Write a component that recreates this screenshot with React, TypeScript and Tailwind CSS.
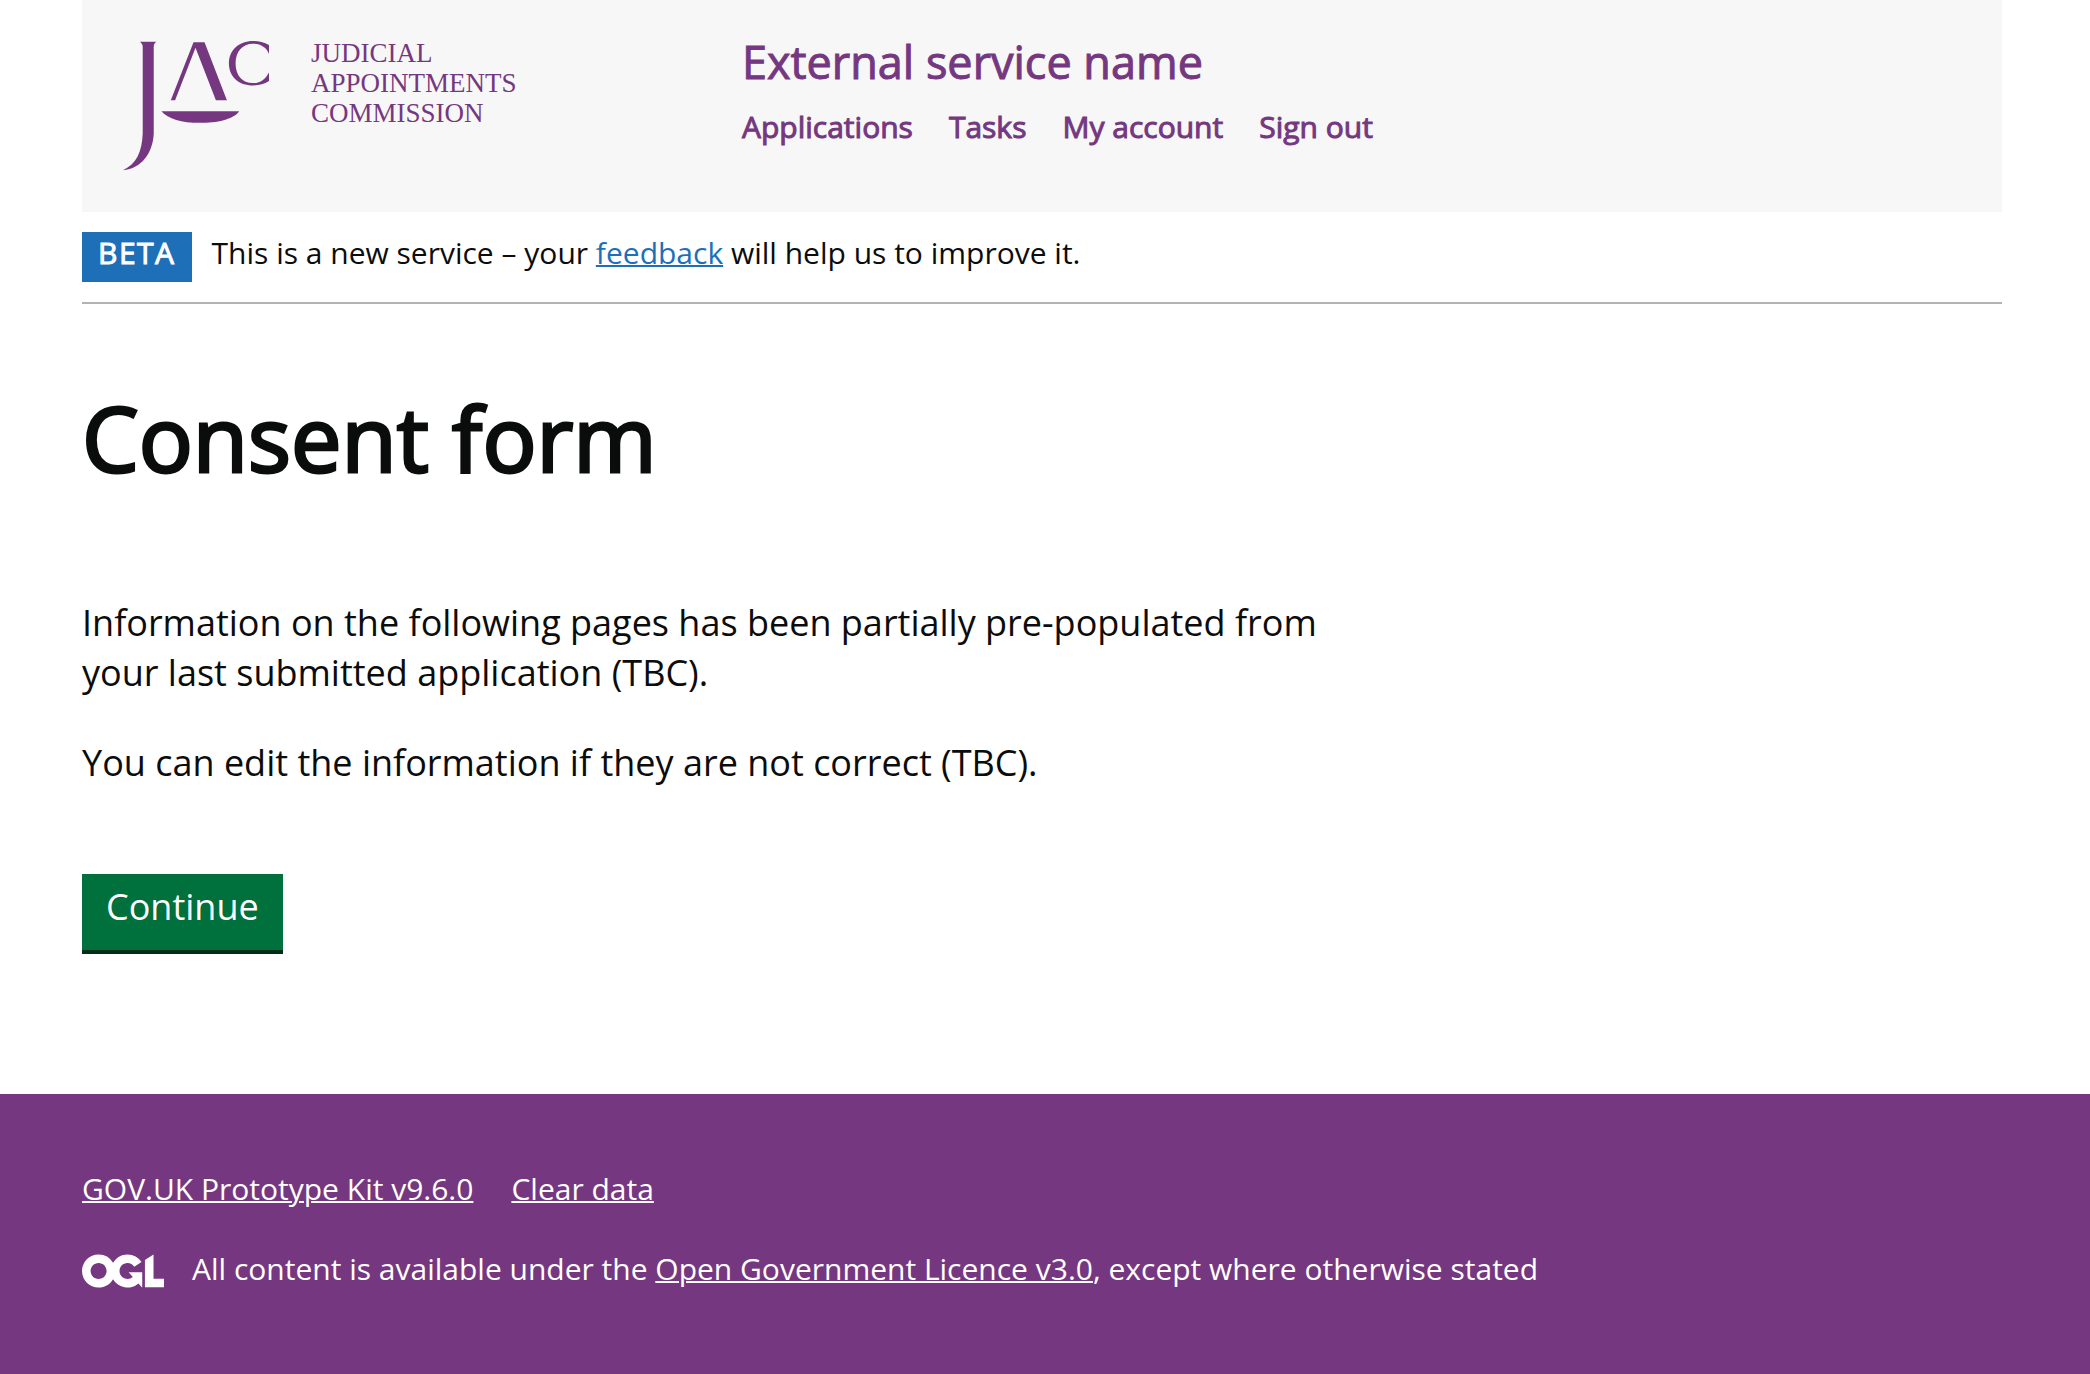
const navItems = ["Applications", "Tasks", "My account", "Sign out"];

function JacMark() {
  return (
    <svg viewBox="160 120 440 392" className="mt-0.5 h-[131px] w-[147px] shrink-0" fill="currentColor" aria-hidden="true">
      <path d="M210 125H260C254 129 252 133 252 141V400C250 457 215 506 160 510C200 491 217 455 219 400V141C219 133 216 129 210 125Z" />
      <path d="M371 127H404L471 300H438L377 143L316 300H303Z" />
      <path d="M597 135C582 127 565 123 550 123C505 123 477 152 477 190C477 228 505 256 550 256C567 256 583 252 597 243V217C586 238 570 249 549 249C517 249 497 225 497 190C497 155 517 131 549 131C572 131 590 142 597 162Z" />
      <path d="M275 333H508C490 358 440 368 390 368C335 368 295 356 275 333Z" />
    </svg>
  );
}

function OglMark() {
  return (
    <svg viewBox="0 0 483.2 195.7" className="mt-1 h-[34px] w-[82px] shrink-0" fill="currentColor" aria-hidden="true">
      <path d="M421.5 142.8V.1l-50.7 32.3v161.1h112.4v-50.7zm-122.3-9.6A47.12 47.12 0 0 1 221 97.8c0-26 21.1-47.1 47.1-47.1 16.7 0 31.4 8.7 39.7 21.8l42.7-27.2A97.63 97.63 0 0 0 268.1 0c-36.5 0-68.3 20.1-85.1 49.7A98 98 0 0 0 97.8 0C43.9 0 0 43.9 0 97.8s43.9 97.8 97.8 97.8c36.5 0 68.3-20.1 85.1-49.7a97.76 97.76 0 0 0 149.6 25.4l19.4 22.2h3v-87.8h-80l24.3 27.5zM97.8 145c-26 0-47.1-21.1-47.1-47.1s21.1-47.1 47.1-47.1 47.1 21.1 47.1 47.1S123.8 145 97.8 145" />
    </svg>
  );
}

export default function App() {
  return (
    <div className="flex min-h-screen flex-col bg-white font-['Open_Sans',sans-serif] text-[#0b0c0c]">
      <div className="pr-[88px] pl-[82px]">
        <header className="flex bg-[#f7f7f7] pt-[38px] pr-10 pb-[41px] pl-[41px] text-[#753880]">
          <a href="#" className="flex w-[619px] shrink-0 gap-[41px]">
            <JacMark />
            <span className="font-['Liberation_Serif',serif] text-[27px] leading-[30px] uppercase">
              Judicial
              <br />
              Appointments
              <br />
              Commission
            </span>
          </a>
          <div className="[-webkit-text-stroke:1px_currentColor]">
            <a href="#" className="block text-[45px] leading-[48px]">
              External service name
            </a>
            <nav className="mt-[21px] flex gap-9 text-[30px] leading-10">
              {navItems.map((item) => (
                <a key={item} href="#">
                  {item}
                </a>
              ))}
            </nav>
          </div>
        </header>

        <div className="flex items-start gap-5 border-b-2 border-[#b1b4b6] py-5 text-[30px] leading-[42px]">
          <strong className="bg-[#1d70b8] px-4 pb-2 font-normal tracking-wider text-white [-webkit-text-stroke:1px_currentColor]">
            BETA
          </strong>
          <p>
            This is a new service – your{" "}
            <a href="#" className="text-[#1d70b8] underline decoration-2">
              feedback
            </a>{" "}
            will help us to improve it.
          </p>
        </div>

        <main className="pt-[83px] pb-[140px]">
          <h1 className="text-[90px] leading-[100px] [-webkit-text-stroke:3px_currentColor]">Consent form</h1>
          <div className="mt-[111px] w-2/3 text-[36px] leading-[50px]">
            <p>
              Information on the following pages has been partially pre-populated from your last submitted application
              (TBC).
            </p>
            <p className="mt-10">You can edit the information if they are not correct (TBC).</p>
          </div>
          <button
            type="button"
            className="mt-[86px] border-b-4 border-[#002d18] bg-[#00703c] px-6 pt-2 pb-[18px] text-[36px] leading-[50px] text-white"
          >
            Continue
          </button>
        </main>
      </div>

      <footer className="grow bg-[#753880] pt-[75px] pr-[88px] pb-20 pl-[82px] text-[30px] leading-10 text-white">
        <div className="flex gap-[38px]">
          <a href="#" className="underline decoration-2">
            GOV.UK Prototype Kit v9.6.0
          </a>
          <a href="#" className="underline decoration-2">
            Clear data
          </a>
        </div>
        <div className="mt-10 flex items-center gap-7">
          <OglMark />
          <p>
            All content is available under the{" "}
            <a href="#" className="underline decoration-2">
              Open Government Licence v3.0
            </a>
            , except where otherwise stated
          </p>
        </div>
      </footer>
    </div>
  );
}
